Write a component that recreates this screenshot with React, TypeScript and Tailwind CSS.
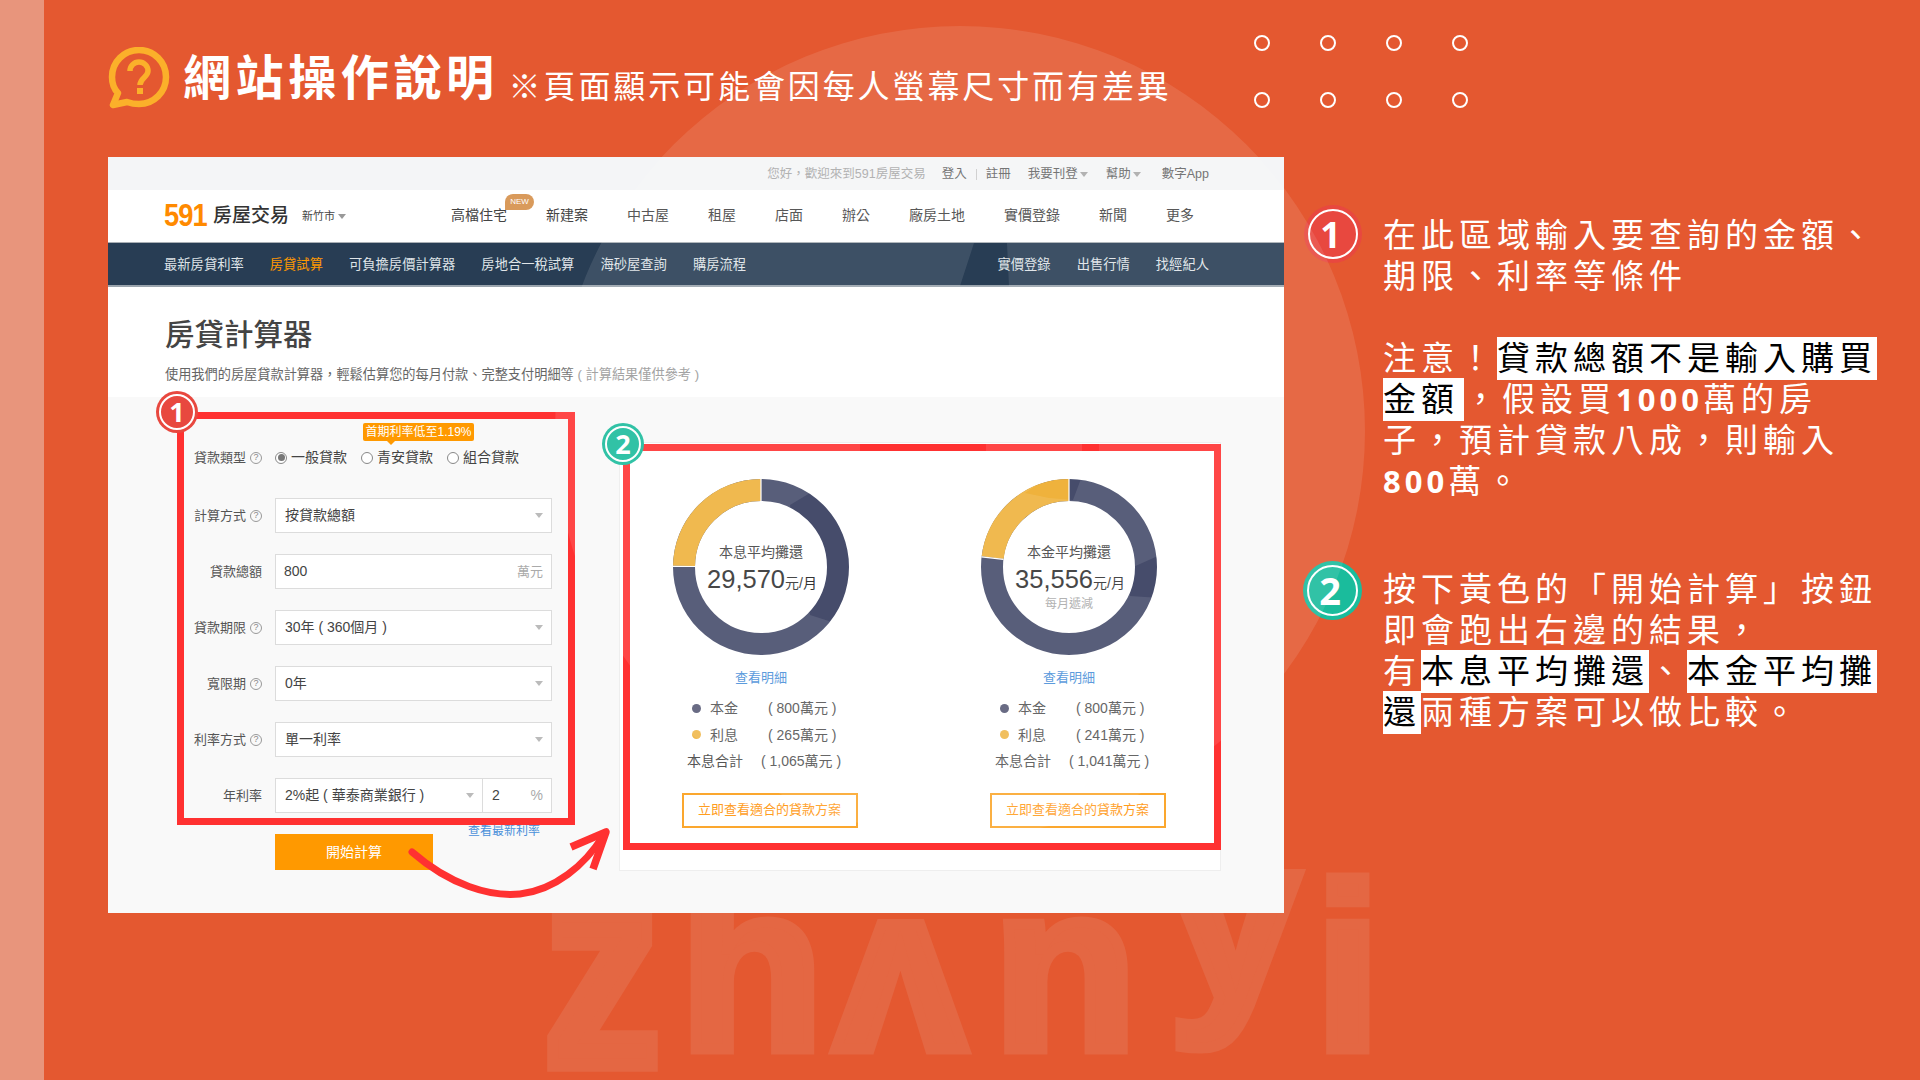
const CJK = "font-['Liberation_Sans','Noto_Sans_CJK_TC',sans-serif]";

function Caret({ className = "" }: { className?: string }) {
  return (
    <svg width="8" height="5" viewBox="0 0 8 5" className={className}>
      <path d="M0 0h8L4 5z" fill="currentColor" />
    </svg>
  );
}

function Help() {
  return (
    <span className="ml-[4px] inline-flex h-[12px] w-[12px] shrink-0 items-center justify-center rounded-full border border-[#999] text-[9px] leading-none text-[#888]">
      ?
    </span>
  );
}

function Label({ text, help = true }: { text: string; help?: boolean }) {
  return (
    <div className="flex w-[97px] shrink-0 items-center justify-end text-[13px] text-[#555]">
      {text}
      {help && <Help />}
    </div>
  );
}

function SelectBox({ value, className = "w-[277px]" }: { value: string; className?: string }) {
  return (
    <div className={`flex h-[35px] items-center justify-between border border-[#dcdcdc] bg-white pl-[9px] pr-[8px] text-[14px] text-[#444] ${className}`}>
      <span>{value}</span>
      <Caret className="text-[#bbb]" />
    </div>
  );
}

function Radio({ label, checked = false }: { label: string; checked?: boolean }) {
  return (
    <div className="flex items-center gap-[4px] text-[14px] text-[#444]">
      <span className="flex h-[12px] w-[12px] items-center justify-center rounded-full border border-[#888] bg-white">
        {checked && <span className="h-[7px] w-[7px] rounded-full bg-[#777]" />}
      </span>
      {label}
    </div>
  );
}

function Row({ children }: { children: React.ReactNode }) {
  return <div className="flex h-[35px] items-center gap-[13px]">{children}</div>;
}

function Ring({ share }: { share: number }) {
  const r = 77;
  const c = 2 * Math.PI * r;
  const a = share * 2 * Math.PI;
  // position of the seam between principal and interest
  const sx = 88 - Math.sin(a) * 66;
  const sy = 88 - Math.cos(a) * 66;
  const ex = 88 - Math.sin(a) * 88;
  const ey = 88 - Math.cos(a) * 88;
  return (
    <svg width="176" height="176" viewBox="0 0 176 176" className="absolute inset-0">
      <g transform="rotate(-90 88 88)" fill="none" strokeWidth="22">
        <circle cx="88" cy="88" r={r} stroke="#464c6b" />
        <circle
          cx="88"
          cy="88"
          r={r}
          stroke="#efb23c"
          strokeDasharray={`${c * share} ${c * (1 - share)}`}
          strokeDashoffset={c * share}
        />
      </g>
      <path d={`M88 0V22M${sx} ${sy}L${ex} ${ey}`} stroke="#fff" strokeWidth="1.2" />
    </svg>
  );
}

function Plan({
  title,
  amount,
  share,
  interest,
  total,
  note,
}: {
  title: string;
  amount: string;
  share: number;
  interest: string;
  total: string;
  note?: string;
}) {
  return (
    <div className="flex w-[176px] flex-col items-center">
      <div className="relative h-[176px] w-[176px]">
        <Ring share={share} />
        <div className="absolute inset-0 flex flex-col items-center pt-[63px] text-[#444]">
          <div className="text-[14px] leading-[20px]">{title}</div>
          <div className="mt-[-1px] flex items-baseline pl-[2px] leading-[36px] text-[#333]">
            <span className="text-[25.5px]">{amount}</span>
            <span className="text-[14px]">元/月</span>
          </div>
          {note && <div className="mt-[-5px] text-[12px] leading-[16px] text-[#aaa]">{note}</div>}
        </div>
      </div>
      <a className="mt-[13px] text-[13px] leading-[20px] text-[#4a90d9]">查看明細</a>
      <div className="mt-[7px] flex w-[176px] flex-col text-[14px] leading-[26.5px] text-[#555]">
        <div className="flex items-center pl-[19px]">
          <span className="h-[9px] w-[9px] rounded-full bg-[#585b76]" />
          <span className="ml-[9px] w-[58px]">本金</span>
          <span>( 800萬元 )</span>
        </div>
        <div className="flex items-center pl-[19px]">
          <span className="h-[9px] w-[9px] rounded-full bg-[#f0b84c]" />
          <span className="ml-[9px] w-[58px]">利息</span>
          <span>( {interest}萬元 )</span>
        </div>
        <div className="flex items-center pl-[14px]">
          <span className="w-[74px]">本息合計</span>
          <span className="whitespace-nowrap">( {total}萬元 )</span>
        </div>
      </div>
      <button className="ml-[17px] mt-[18px] flex h-[35px] w-[176px] shrink-0 items-center justify-center whitespace-nowrap border-2 border-[#fba72e] bg-white text-[13px] text-[#ff9d1e]">
        立即查看適合的貸款方案
      </button>
    </div>
  );
}

function StepBadge({ n, className }: { n: string; className: string }) {
  return (
    <div className={`flex items-center justify-center rounded-full ${className}`}>
      <div className="flex h-[86%] w-[86%] items-center justify-center rounded-full border-2 border-white font-['Open_Sans',sans-serif] font-bold text-white">
        {n}
      </div>
    </div>
  );
}

function Mark({ children, className = "" }: { children: React.ReactNode; className?: string }) {
  return (
    <span className={`-my-px inline-block h-[43px] bg-white align-top leading-[43px] text-black ${className}`}>
      {children}
    </span>
  );
}

function Num({ children }: { children: React.ReactNode }) {
  return <span className="font-['Open_Sans',sans-serif] text-[31px] font-bold tracking-[4px]">{children}</span>;
}

function Site() {
  const mainNav = ["新建案", "中古屋", "租屋", "店面", "辦公", "廠房土地", "實價登錄", "新聞", "更多"];
  return (
    <div className={`flex h-[756px] w-[1176px] shrink-0 flex-col bg-white ${CJK}`}>
      {/* account strip */}
      <div className="flex h-[33px] items-center justify-end bg-[#f4f5f7] pr-[75px] pt-[2px] text-[12.5px] text-[#666]">
        <span className="text-[#aaa]">您好，歡迎來到591房屋交易</span>
        <span className="ml-[16px]">登入</span>
        <span className="mx-[9px] h-[11px] w-px bg-[#ccc]" />
        <span>註冊</span>
        <span className="ml-[17px] flex items-center gap-[2px]">我要刊登<Caret className="text-[#aaa]" /></span>
        <span className="ml-[18px] flex items-center gap-[2px]">幫助<Caret className="text-[#aaa]" /></span>
        <span className="ml-[21px]">數字App</span>
      </div>

      {/* brand and primary links */}
      <div className="flex h-[53px] items-center border-b border-[#a9afb5] pb-[2px] pl-[56px]">
        <span className="w-[44px] origin-left scale-x-[0.88] font-['Liberation_Sans',sans-serif] text-[31px] font-bold leading-none tracking-[-1px] text-[#ff8a00]">591</span>
        <span className="ml-[5px] pt-[2px] text-[19px] font-medium text-[#333]">房屋交易</span>
        <span className="ml-[13px] flex items-center gap-[3px] pt-[2px] text-[11px] text-[#444]">新竹市<Caret className="text-[#999]" /></span>
        <div className="ml-[105px] flex items-center gap-[39px] text-[14px] text-[#444]">
          <span className="relative">
            高檔住宅
            <span className="absolute left-[54px] top-[-11px] flex h-[16px] w-[29px] items-center justify-center rounded-full rounded-bl-none bg-[#d99a5b] text-[8px] text-white">NEW</span>
          </span>
          {mainNav.map((item) => (
            <span key={item}>{item}</span>
          ))}
        </div>
      </div>

      {/* section links */}
      <div className="flex h-[44px] items-center justify-between border-b-2 border-[#9aa4ad] bg-[#283d54] pl-[56px] pr-[75px] pt-[2px] text-[13.3px] text-[#dfe4e8]">
        <div className="flex gap-[26px]">
          <span>最新房貸利率</span>
          <span className="text-[#ff9900]">房貸試算</span>
          <span>可負擔房價計算器</span>
          <span>房地合一稅試算</span>
          <span>海砂屋查詢</span>
          <span>購房流程</span>
        </div>
        <div className="flex gap-[26px]">
          <span>實價登錄</span>
          <span>出售行情</span>
          <span>找經紀人</span>
        </div>
      </div>

      {/* page heading */}
      <div className="h-[110px] pl-[57px] pt-[26px]">
        <h2 className="text-[29.5px] font-medium leading-[44px] text-[#444]">房貸計算器</h2>
        <p className="mt-[8px] text-[13.2px] leading-[20px] text-[#666]">
          使用我們的房屋貸款計算器，輕鬆估算您的每月付款、完整支付明細等<span className="text-[#999]"> ( 計算結果僅供參考 )</span>
        </p>
      </div>

      {/* calculator */}
      <div className="relative flex flex-1 bg-[#f9f9f9]">
        <div className="relative ml-[69px] mt-[15px] flex h-[460px] w-[398px] flex-col">
          <div className="-ml-[12px] flex flex-col gap-[21px] pt-[28px]">
            <div className="relative mb-[2px] flex h-[35px] items-center gap-[13px]">
              <Label text="貸款類型" />
              <div className="flex items-center gap-[14px]">
                <Radio label="一般貸款" checked />
                <Radio label="青安貸款" />
                <Radio label="組合貸款" />
              </div>
              <div className="absolute left-[198px] top-[-17px] flex h-[18px] w-[111px] items-center justify-center rounded-[2px] bg-[#ff9900] text-[12px] text-white">
                首期利率低至1.19%
                <span className="absolute left-[24px] top-[18px] h-0 w-0 border-x-[4px] border-t-[4px] border-x-transparent border-t-[#ff9900]" />
              </div>
            </div>
            <Row><Label text="計算方式" /><SelectBox value="按貸款總額" /></Row>
            <Row>
              <Label text="貸款總額" help={false} />
              <div className="flex h-[35px] w-[277px] items-center justify-between border border-[#dcdcdc] bg-white pl-[8px] pr-[8px] text-[14px] text-[#444]">
                <span>800</span>
                <span className="text-[13px] text-[#aaa]">萬元</span>
              </div>
            </Row>
            <Row><Label text="貸款期限" /><SelectBox value="30年 ( 360個月 )" /></Row>
            <Row><Label text="寬限期" /><SelectBox value="0年" /></Row>
            <Row><Label text="利率方式" /><SelectBox value="單一利率" /></Row>
            <Row>
              <Label text="年利率" help={false} />
              <div className="flex">
                <SelectBox value="2%起 ( 華泰商業銀行 )" className="w-[208px]" />
                <div className="ml-[-1px] flex h-[35px] w-[70px] items-center justify-between border border-[#dcdcdc] bg-white pl-[9px] pr-[8px] text-[14px] text-[#444]">
                  <span>2</span>
                  <span className="text-[#aaa]">%</span>
                </div>
              </div>
            </Row>
          </div>
          <div className="relative ml-[98px] mt-[21px]">
            <button className="flex h-[36px] w-[158px] items-center justify-center bg-[#ff9900] text-[14px] text-white">開始計算</button>
            <a className="absolute left-[193px] top-[-12px] text-[12px] leading-[18px] text-[#4a90d9]">查看最新利率</a>
          </div>
          <div className="absolute inset-0 bottom-[47px] border-[7px] border-[#ff3131]" />
          <StepBadge n="1" className="absolute left-[-21px] top-[-21px] h-[42px] w-[42px] bg-[#e8483f] text-[27px]" />
        </div>

        <div className="relative ml-[44px] mt-[45px] h-[429px] w-[602px] border border-[#eee] bg-white">
          <div className="flex gap-[132px] pl-[53px] pt-[36px]">
            <Plan title="本息平均攤還" amount="29,570" share={0.2488} interest="265" total="1,065" />
            <Plan title="本金平均攤還" amount="35,556" share={0.2315} interest="241" total="1,041" note="每月遞減" />
          </div>
          <div className="absolute bottom-[20px] left-[3px] right-[-1px] top-[1px] border-[7px] border-[#ff3131]" />
          <StepBadge n="2" className="absolute left-[-18px] top-[-20px] h-[42px] w-[42px] bg-[#1abc9c] text-[27px]" />
        </div>
      </div>
    </div>
  );
}

export default function App() {
  return (
    <div className={`relative h-[1080px] w-[1920px] overflow-hidden bg-[#e45830] ${CJK}`}>
      {/* brand word behind the slide content */}
      <div className="absolute left-[526px] top-[784px] flex h-[184px] items-end font-['Liberation_Sans',sans-serif] text-[235px] font-bold leading-[0] text-[#e46743] [-webkit-text-stroke:11px_#e46743]">
        <span className="flex w-[152px] origin-bottom scale-y-[1.2] justify-center">z</span>
        <span className="flex w-[147px] justify-center">h</span>
        <span className="flex w-[150px] justify-center">ʌ</span>
        <span className="flex w-[180px] justify-center">n</span>
        <span className="flex w-[158px] -translate-y-[50px] justify-center">y</span>
        <span className="flex w-[70px] justify-center">i</span>
      </div>

      <div className="relative flex h-full">
        <div className="w-[44px] shrink-0 bg-[#e8957c]" />
        <div className="flex flex-1 flex-col pl-[64px]">
          <header className="relative flex h-[157px] items-start pt-[47px] text-white">
            <svg width="62" height="62" viewBox="0 0 62 62" className="shrink-0">
              <path
                d="M31 3C16 3 4 15 4 30c0 6 2 12 6 16l-5 12 14-3c3 1 8 2 12 2 15 0 27-12 27-27S46 3 31 3z"
                fill="none"
                stroke="#fbb02a"
                strokeWidth="6.5"
                strokeLinejoin="round"
              />
              <path d="M22 24c0-5 4-9 9-9s9 4 9 9c0 6-8 7-8 14" fill="none" stroke="#fbb02a" strokeWidth="5.5" />
              <rect x="29" y="41" width="6" height="6" fill="#fbb02a" />
            </svg>
            <h1 className="ml-[13px] mt-[4px] text-[48px] font-bold leading-[56px] tracking-[4.6px]">網站操作說明</h1>
            <p className="ml-[10px] mt-[16px] text-[32px] leading-[48px] tracking-[2.9px]">※頁面顯示可能會因每人螢幕尺寸而有差異</p>
            <div className="absolute left-[1146px] top-[35px] grid grid-cols-4 gap-x-[50px] gap-y-[41px]">
              {Array.from({ length: 8 }).map((_, i) => (
                <span key={i} className="h-[16px] w-[16px] rounded-full border-[2.5px] border-white" />
              ))}
            </div>
          </header>

          <div className="flex">
            <Site />
            <div className="ml-[23px] pt-[53px] text-[33px] leading-[41px] tracking-[5px] whitespace-nowrap text-white">
              <div className="-ml-[3px] flex gap-[21px]">
                <StepBadge n="1" className="-mt-[5px] h-[58px] w-[58px] shrink-0 bg-[#e8483f] text-[36px]" />
                <div className="pt-[5px]">
                  <div>在此區域輸入要查詢的金額、</div>
                  <div>期限、利率等條件</div>
                  <div className="h-[41px]" />
                  <div>注意！<Mark>貸款總額不是輸入購買</Mark></div>
                  <div><Mark className="pr-[5px]">金額</Mark>，假設買<Num>1000</Num>萬的房</div>
                  <div>子，預計貸款八成，則輸入</div>
                  <div><Num>800</Num>萬。</div>
                </div>
              </div>
              <div className="-ml-[4px] mt-[67px] flex gap-[21px]">
                <StepBadge n="2" className="-mt-[8px] h-[59px] w-[59px] shrink-0 bg-[#1abc9c] text-[38px]" />
                <div>
                  <div>按下黃色的「開始計算」按鈕</div>
                  <div>即會跑出右邊的結果，</div>
                  <div>有<Mark>本息平均攤還</Mark>、<Mark>本金平均攤</Mark></div>
                  <div><Mark>還</Mark>兩種方案可以做比較。</div>
                </div>
              </div>
            </div>
          </div>
        </div>
      </div>

      {/* translucent disc and the hand-drawn arrow sit above everything */}
      <svg width="1920" height="1080" viewBox="0 0 1920 1080" className="pointer-events-none absolute inset-0">
        <path
          fillRule="evenodd"
          fill="#fff"
          fillOpacity="0.1"
          d="M555 431a405 405 0 1 0 810 0a405 405 0 1 0 -810 0z
             M974 243L1007 243L1009 286L960 286z
             M860 444L986 444L986 451L860 451z
             M1082 444L1099 444L1099 451L1082 451z
             M815 490L790 505L810 615L832 622L870 600L870 500z
             M1131 568L1160 555L1160 598L1130 596z
             M1025 493L1050 476L1082 476L1073 500L1049 498z"
        />
        <path d="M412 852C450 885 490 897 520 894C555 890 585 865 603 836" fill="none" stroke="#ff3131" strokeWidth="7" strokeLinecap="round" />
        <path d="M571 847L606 832L593 869" fill="none" stroke="#ff3131" strokeWidth="7.5" strokeLinejoin="round" />
      </svg>
    </div>
  );
}
